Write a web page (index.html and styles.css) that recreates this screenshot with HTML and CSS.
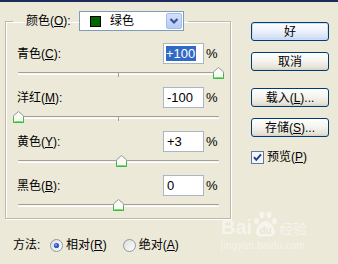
FILE: index.html
```html
<!DOCTYPE html>
<html lang="zh-CN">
<head>
<meta charset="utf-8">
<title>可选颜色</title>
<link rel="stylesheet" href="styles.css">
</head>
<body>
<div class="dialog">
  <div class="main">
    <fieldset class="group">
      <legend class="legend">
        <span class="legend-label">颜色(<u>O</u>):</span>
        <span class="combo">
          <span class="swatch"></span>
          <span class="combo-text">绿色</span>
          <span class="combo-btn">
            <svg width="14" height="16" viewBox="0 0 14 16"><path d="M3.5 6 L7 9.5 L10.5 6" fill="none" stroke="#3d5488" stroke-width="2.2"/></svg>
          </span>
        </span>
      </legend>

      <div class="group-body">
        <div class="row">
          <span class="lbl">青色(<u>C</u>):</span>
          <span class="field"><span class="sel">+100</span></span>
          <span class="pct">%</span>
        </div>
        <div class="slider">
          <div class="track"></div>
          <span class="tick"></span>
          <svg class="thumb" style="left:195px" width="11" height="12" viewBox="0 0 11 12"><path d="M0.5 11.5 V4.8 L5.5 0.5 L10.5 4.8 V11.5 Z" fill="#fbfbf6" stroke="#8f9a9c"/><path d="M0.5 7 V11.5 H10.5 V7" fill="none" stroke="#3cb83c"/><path d="M1.5 10.5 H9.5" stroke="#7ed87e"/></svg>
        </div>

        <div class="row">
          <span class="lbl">洋红(<u>M</u>):</span>
          <span class="field">-100</span>
          <span class="pct">%</span>
        </div>
        <div class="slider">
          <div class="track"></div>
          <span class="tick"></span>
          <svg class="thumb" style="left:-5px" width="11" height="12" viewBox="0 0 11 12"><path d="M0.5 11.5 V4.8 L5.5 0.5 L10.5 4.8 V11.5 Z" fill="#fbfbf6" stroke="#8f9a9c"/><path d="M0.5 7 V11.5 H10.5 V7" fill="none" stroke="#3cb83c"/><path d="M1.5 10.5 H9.5" stroke="#7ed87e"/></svg>
        </div>

        <div class="row">
          <span class="lbl">黄色(<u>Y</u>):</span>
          <span class="field">+3</span>
          <span class="pct">%</span>
        </div>
        <div class="slider">
          <div class="track"></div>
          <span class="tick"></span>
          <svg class="thumb" style="left:98px" width="11" height="12" viewBox="0 0 11 12"><path d="M0.5 11.5 V4.8 L5.5 0.5 L10.5 4.8 V11.5 Z" fill="#fbfbf6" stroke="#8f9a9c"/><path d="M0.5 7 V11.5 H10.5 V7" fill="none" stroke="#3cb83c"/><path d="M1.5 10.5 H9.5" stroke="#7ed87e"/></svg>
        </div>

        <div class="row">
          <span class="lbl">黑色(<u>B</u>):</span>
          <span class="field">0</span>
          <span class="pct">%</span>
        </div>
        <div class="slider last">
          <div class="track"></div>
          <span class="tick"></span>
          <svg class="thumb" style="left:95px" width="11" height="12" viewBox="0 0 11 12"><path d="M0.5 11.5 V4.8 L5.5 0.5 L10.5 4.8 V11.5 Z" fill="#fbfbf6" stroke="#8f9a9c"/><path d="M0.5 7 V11.5 H10.5 V7" fill="none" stroke="#3cb83c"/><path d="M1.5 10.5 H9.5" stroke="#7ed87e"/></svg>
        </div>
      </div>
    </fieldset>

    <div class="method">
      <span class="method-label">方法:</span>
      <span class="opt">
        <svg class="radio" width="13" height="13" viewBox="0 0 13 13"><defs><linearGradient id="rg" x1="0" y1="0" x2="1" y2="1"><stop offset="0" stop-color="#dcdcd6"/><stop offset="1" stop-color="#ffffff"/></linearGradient></defs><circle cx="6.5" cy="6.5" r="6" fill="url(#rg)" stroke="#8a98a8"/><circle cx="6.5" cy="6.5" r="2.6" fill="#3256d0"/><circle cx="6" cy="6" r="1" fill="#8aa4f0"/></svg>
        <span>相对(<u>R</u>)</span>
      </span>
      <span class="opt">
        <svg class="radio" width="13" height="13" viewBox="0 0 13 13"><defs><linearGradient id="rg2" x1="0" y1="0" x2="1" y2="1"><stop offset="0" stop-color="#dcdcd6"/><stop offset="1" stop-color="#ffffff"/></linearGradient></defs><circle cx="6.5" cy="6.5" r="6" fill="url(#rg2)" stroke="#8a98a8"/></svg>
        <span>绝对(<u>A</u>)</span>
      </span>
    </div>
  </div>

  <div class="side">
    <button class="btn default">好</button>
    <button class="btn gap-s">取消</button>
    <button class="btn gap-l">载入(<u>L</u>)...</button>
    <button class="btn gap-s">存储(<u>S</u>)...</button>
    <label class="check">
      <svg width="13" height="13" viewBox="0 0 13 13"><rect x="0.5" y="0.5" width="12" height="12" fill="#f6f6f2" stroke="#5a7aa8"/><path d="M3 6.2 L5.3 8.8 L10 3.4" fill="none" stroke="#1f3c9c" stroke-width="2"/></svg>
      <span>预览(<u>P</u>)</span>
    </label>
  </div>
</div>

<div class="watermark">
  <div class="wm-line">
    <span class="wm-bai">Bai</span>
    <svg class="wm-paw" width="25" height="27" viewBox="0 0 25 27">
      <ellipse cx="9" cy="4" rx="2.6" ry="3.4" fill="rgba(255,255,255,0.5)"/>
      <ellipse cx="16" cy="4" rx="2.6" ry="3.4" fill="rgba(255,255,255,0.5)"/>
      <ellipse cx="3.5" cy="10" rx="2.5" ry="3.2" fill="rgba(255,255,255,0.5)"/>
      <ellipse cx="21.5" cy="10" rx="2.5" ry="3.2" fill="rgba(255,255,255,0.5)"/>
      <path d="M12.5 10 C8 10 4 16 3 20 C2 25 7 26.5 12.5 25 C18 26.5 23 25 22 20 C21 16 17 10 12.5 10 Z" fill="rgba(255,255,255,0.5)"/>
      <text x="12.5" y="23" text-anchor="middle" font-family="Liberation Sans, sans-serif" font-weight="bold" font-size="10" fill="#e8e5d3">du</text>
    </svg>
    <span class="wm-jy">经验</span>
  </div>
  <div class="wm-url">jingyan.baidu.com</div>
</div>
</body>
</html>
```

FILE: styles.css
```css
html, body {
  margin: 0;
  padding: 0;
}

body {
  width: 338px;
  height: 264px;
  overflow: hidden;
  background: #ece9d8;
  font-family: "Liberation Sans", "Noto Sans CJK SC", sans-serif;
  font-size: 12px;
  line-height: 14px;
  color: #000;
  position: relative;
}

u {
  text-decoration: underline;
  text-underline-offset: 1px;
}

.dialog {
  display: flex;
  height: 262px;
  border-top: 2px solid #1d2c5c;
}

.main {
  width: 240px;
  flex: none;
}

/* group box */
.group {
  box-sizing: border-box;
  width: 226px;
  margin: 9px 0 0 5px;
  padding: 0;
  border: 1px solid #bdbaa9;
  box-shadow: 1px 1px 0 #fff, inset 1px 1px 0 #fff;
  min-inline-size: 0;
}

.legend {
  display: flex;
  align-items: center;
  height: 20px;
  margin-left: 7px;
  padding: 0 4px 0 13px;
}

.legend-label {
  width: 53px;
}

.combo {
  box-sizing: border-box;
  display: flex;
  align-items: center;
  width: 105px;
  height: 20px;
  background: #fff;
  border: 1px solid #7f9db9;
  padding: 1px 1px 1px 10px;
}

.swatch {
  box-sizing: border-box;
  width: 11px;
  height: 11px;
  background: #006600;
  border: 1px solid #000;
}

.combo-text {
  margin-left: 9px;
  flex: 1;
}

.combo-btn {
  box-sizing: border-box;
  width: 16px;
  height: 16px;
  display: flex;
  align-items: center;
  justify-content: center;
  background: linear-gradient(#d3e0fd, #b6cbf8);
  border: 1px solid #a5bcef;
  border-radius: 2px;
}

.group-body {
  padding: 12px 7px 0 11px;
}

.row {
  display: grid;
  grid-template-columns: 1fr 41px 19px;
  align-items: center;
  height: 21px;
}

.field {
  box-sizing: border-box;
  height: 21px;
  display: flex;
  align-items: center;
  padding-left: 3px;
  background: #fff;
  border: 1px solid #a9b6c4;
  font-size: 13px;
}

.sel {
  background: #316ac5;
  color: #fff;
  line-height: 15px;
  padding-right: 1px;
  margin-left: -1px;
}

.pct {
  padding-left: 2px;
  font-size: 13px;
}

.slider {
  position: relative;
  box-sizing: border-box;
  width: 201px;
  height: 23px;
  margin-left: 1px;
  padding-top: 8px;
}

.slider.last {
  height: 22px;
}

.track {
  height: 1px;
  background: #f6f5ef;
  border-top: 1px solid #a3a197;
  border-bottom: 1px solid #ffffff;
  border-radius: 1px;
}

.tick {
  position: absolute;
  left: 100px;
  top: 8px;
  width: 1px;
  height: 5px;
  background: #a3a197;
}

.thumb {
  position: absolute;
  top: 3px;
  display: block;
}

/* method */
.method {
  display: flex;
  align-items: center;
  height: 16px;
  margin: 18px 0 0 13px;
}

.method-label {
  width: 37px;
}

.opt {
  display: flex;
  align-items: center;
  gap: 3px;
  margin-right: 16px;
}

.radio {
  display: block;
}

/* side buttons */
.side {
  display: flex;
  flex-direction: column;
  margin-left: 11px;
  margin-top: 20px;
  width: 78px;
}

.btn {
  box-sizing: border-box;
  width: 78px;
  height: 19px;
  padding: 0;
  border: 1px solid #003c74;
  border-radius: 3px;
  background: linear-gradient(#ffffff, #f5f4ef 45%, #e6e3d8 85%, #d6d0c5);
  font-family: "Liberation Sans", "Noto Sans CJK SC", sans-serif;
  font-size: 12px;
  line-height: 14px;
  color: #000;
}

.btn.default {
  background: linear-gradient(#ffffff, #eef2fb 45%, #d6e1f6 85%, #b8cbef);
  box-shadow: inset 0 0 0 1px #cddcf7;
}

.gap-s {
  margin-top: 11px;
}

.gap-l {
  margin-top: 17px;
}

.check {
  display: flex;
  align-items: center;
  gap: 3px;
  margin-top: 13px;
}

.check svg {
  display: block;
}

/* watermark overlay */
.watermark {
  position: absolute;
  left: 221px;
  top: 209px;
  width: 90px;
  color: rgba(255, 255, 255, 0.5);
}

.wm-line {
  display: flex;
  align-items: flex-end;
  height: 29px;
}

.wm-bai {
  font-family: "Liberation Sans", sans-serif;
  font-weight: bold;
  font-size: 20px;
  line-height: 20px;
  margin-bottom: 1px;
}

.wm-paw {
  display: block;
  margin: 0 1px;
}

.wm-jy {
  font-size: 14px;
  line-height: 16px;
  margin-bottom: 1px;
}

.wm-url {
  font-size: 10px;
  line-height: 12px;
  margin-top: 2px;
  letter-spacing: 0.2px;
}
```
